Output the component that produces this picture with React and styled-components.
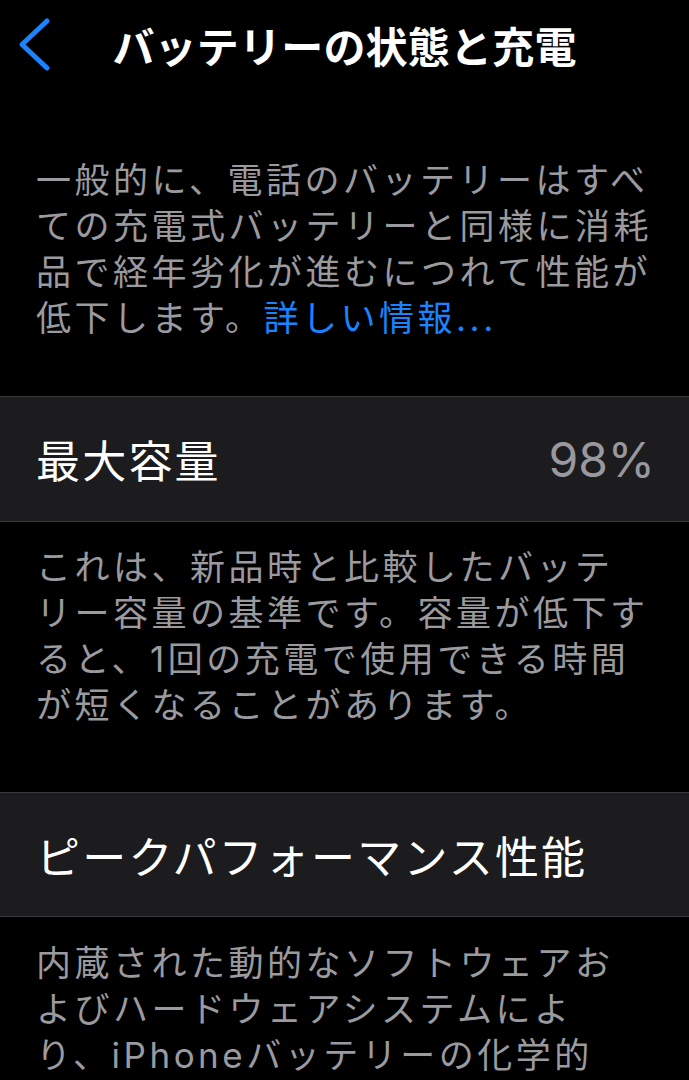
import React from "react";
import styled, { createGlobalStyle } from "styled-components";

const GlobalStyle = createGlobalStyle`
  html, body {
    margin: 0;
    padding: 0;
    background: #000;
  }
  body {
    font-family: Inter, "Noto Sans CJK JP", sans-serif;
    -webkit-font-smoothing: antialiased;
  }
`;

const Screen = styled.div`
  width: 689px;
  height: 1080px;
  background: #000;
  color: #fff;
  overflow: hidden;
`;

const NavBar = styled.div`
  display: grid;
  grid-template-columns: 80px 1fr 80px;
  align-items: center;
  height: 88px;
`;

const BackButton = styled.button`
  display: flex;
  align-items: center;
  justify-content: flex-start;
  padding: 0 0 0 17px;
  height: 88px;
  background: none;
  border: none;
  cursor: pointer;
`;

const NavTitle = styled.h1`
  margin: 0;
  text-align: center;
  font-family: "Noto Sans CJK JP", sans-serif;
  font-size: 42px;
  font-weight: 700;
  letter-spacing: 0.2px;
  color: #fff;
  white-space: nowrap;
`;

const Note = styled.p`
  margin: ${(p) => p.$margin || "0"};
  padding: 0 20px 0 36px;
  font-family: Inter, "Noto Sans CJK JP", sans-serif;
  font-size: 35px;
  line-height: 46px;
  letter-spacing: 3.5px;
  color: #9a9a9f;
  white-space: nowrap;
`;

const MoreLink = styled.a`
  color: #1a84ff;
  text-decoration: none;
`;

const Row = styled.div`
  display: flex;
  align-items: center;
  justify-content: space-between;
  box-sizing: border-box;
  height: ${(p) => p.$height || 126}px;
  padding: 0 34px 0 36px;
  background: #1c1c1e;
  border-top: 1px solid #3a3a3c;
  border-bottom: 1px solid #3a3a3c;
`;

const RowLabel = styled.span`
  font-family: "Noto Sans CJK JP", sans-serif;
  font-size: 44px;
  letter-spacing: 2.2px;
  color: #fff;
`;

const RowValue = styled.span`
  font-family: Inter, sans-serif;
  font-size: 48px;
  color: #98989e;
`;

const Chevron = () => (
  <svg width="40" height="60" viewBox="0 0 40 60">
    <polyline
      points="30,7 5,30.5 30,54"
      fill="none"
      stroke="#1a84ff"
      strokeWidth="5"
      strokeLinecap="round"
      strokeLinejoin="round"
    />
  </svg>
);

export default function App() {
  return (
    <>
      <GlobalStyle />
      <Screen>
        <NavBar>
          <BackButton aria-label="戻る">
            <Chevron />
          </BackButton>
          <NavTitle>バッテリーの状態と充電</NavTitle>
          <div />
        </NavBar>

        <Note $margin="69px 0 55px">
          一般的に、電話のバッテリーはすべ
          <br />
          ての充電式バッテリーと同様に消耗
          <br />
          品で経年劣化が進むにつれて性能が
          <br />
          低下します。<MoreLink href="#">詳しい情報...</MoreLink>
        </Note>

        <Row $height={126}>
          <RowLabel>最大容量</RowLabel>
          <RowValue>98%</RowValue>
        </Row>

        <Note $margin="22px 0 64px">
          これは、新品時と比較したバッテ
          <br />
          リー容量の基準です。容量が低下す
          <br />
          ると、1回の充電で使用できる時間
          <br />
          が短くなることがあります。
        </Note>

        <Row $height={125}>
          <RowLabel>ピークパフォーマンス性能</RowLabel>
        </Row>

        <Note $margin="23px 0 0">
          内蔵された動的なソフトウェアお
          <br />
          よびハードウェアシステムによ
          <br />
          り、iPhoneバッテリーの化学的
        </Note>
      </Screen>
    </>
  );
}
